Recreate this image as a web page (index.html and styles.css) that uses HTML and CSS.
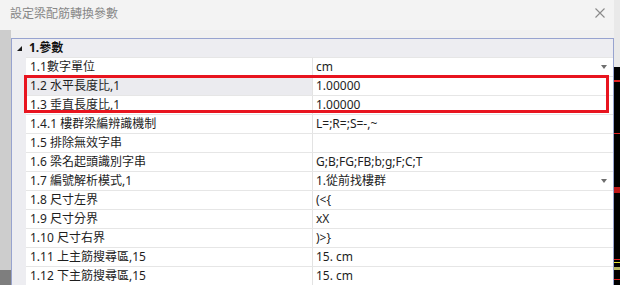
FILE: index.html
```html
<!DOCTYPE html>
<html>
<head>
	<meta charset="UTF-8">
	<title>設定梁配筋轉換參數</title>
	<link rel="stylesheet" href="styles.css">
</head>
<body>
	<div class="screen">
		<div class="dialog">
			<div class="titlebar">
				<span class="title">設定梁配筋轉換參數</span>
				<svg class="close" width="10" height="10" viewBox="0 0 10 10">
					<path d="M0.5 0.5 L9.5 9.5 M9.5 0.5 L0.5 9.5" stroke="#8a8a8a" stroke-width="1.1" fill="none" />
				</svg>
			</div>
			<div class="body">
				<div class="edge"></div>
				<div class="grid">
					<div class="category">
						<svg class="toggle" width="5" height="5" viewBox="0 0 5 5">
							<polygon points="0,5 5,5 5,0" fill="#1a1a1a" />
						</svg>
						<span>1.參數</span>
					</div>
					<div class="rows">
						<div class="gutter"></div>
						<div class="list">
							<div class="row">
								<div class="name">1.1數字單位</div>
								<div class="value">cm<span class="drop"></span></div>
							</div>
							<div class="row current">
								<div class="name">1.2 水平長度比,1</div>
								<div class="value">1.00000</div>
							</div>
							<div class="row">
								<div class="name">1.3 垂直長度比,1</div>
								<div class="value">1.00000</div>
							</div>
							<div class="row">
								<div class="name">1.4.1 樓群梁編辨識機制</div>
								<div class="value">L=;R=;S=-,~</div>
							</div>
							<div class="row">
								<div class="name">1.5 排除無效字串</div>
								<div class="value"></div>
							</div>
							<div class="row">
								<div class="name">1.6 梁名起頭識別字串</div>
								<div class="value">G;B;FG;FB;b;g;F;C;T</div>
							</div>
							<div class="row">
								<div class="name">1.7 編號解析模式,1</div>
								<div class="value">1.從前找樓群<span class="drop"></span></div>
							</div>
							<div class="row">
								<div class="name">1.8 尺寸左界</div>
								<div class="value">(&lt;{</div>
							</div>
							<div class="row">
								<div class="name">1.9 尺寸分界</div>
								<div class="value">xX</div>
							</div>
							<div class="row">
								<div class="name">1.10 尺寸右界</div>
								<div class="value">)&gt;}</div>
							</div>
							<div class="row">
								<div class="name">1.11 上主筋搜尋區,15</div>
								<div class="value">15. cm</div>
							</div>
							<div class="row">
								<div class="name">1.12 下主筋搜尋區,15</div>
								<div class="value">15. cm</div>
							</div>
						</div>
					</div>
					<div class="mark"></div>
				</div>
				<div class="spacer"></div>
			</div>
		</div>
		<div class="backdrop"></div>
	</div>
</body>
</html>
```

FILE: styles.css
```css
body {
	margin: 0;
	font-family: "Noto Sans", "Noto Sans CJK TC", sans-serif;
	font-size: 12px;
	color: #1e1e1e;
}

.screen {
	display: flex;
	width: 620px;
	height: 285px;
	overflow: hidden;
}

.dialog {
	width: 614px;
	display: flex;
	flex-direction: column;
	background-color: #f0f0f0;
}

.titlebar {
	height: 30px;
	box-sizing: border-box;
	padding: 0 9px 5px 10px;
	display: flex;
	align-items: center;
	justify-content: space-between;
	background-color: #f3f3f3;
	color: #868686;
}

.title {
	font-family: "Noto Sans CJK TC", sans-serif;
	line-height: 16px;
}

.body {
	flex: 1;
	display: flex;
	min-height: 0;
}

.edge {
	width: 11px;
	background: linear-gradient(to bottom, #cdcdcd 0 240px, #7e7e7e 240px);
}

.spacer {
	flex: 1;
}

/* property grid */
.grid {
	position: relative;
	width: 601px;
	margin-top: 8px;
	border: 1px solid #97a3cf;
	border-bottom: none;
	background-color: #fff;
	display: flex;
	flex-direction: column;
}

.category {
	height: 19px;
	display: flex;
	align-items: center;
	padding-left: 5px;
	background-color: #ededf1;
	font-weight: bold;
	color: #111;
}

.category span {
	margin-left: 7px;
	line-height: 18px;
}

.rows {
	flex: 1;
	display: flex;
}

.gutter {
	width: 14px;
	background-color: #ededf1;
}

.list {
	flex: 1;
}

.row {
	display: flex;
	height: 19px;
	box-sizing: border-box;
	border-top: 1px solid #e6e6e6;
	line-height: 18px;
}

.name {
	width: 287px;
	padding-left: 4px;
	box-sizing: border-box;
	border-right: 1px solid #e3e3e3;
	flex: none;
	white-space: nowrap;
}

.current .name {
	background-color: #ebebef;
}

.value {
	flex: 1;
	display: flex;
	align-items: center;
	padding-left: 3px;
	white-space: nowrap;
}

.drop {
	margin-left: auto;
	margin-right: 6px;
	width: 0;
	height: 0;
	border-left: 3.5px solid transparent;
	border-right: 3.5px solid transparent;
	border-top: 4px solid #6e6e6e;
}

/* red annotation box over rows 1.2 and 1.3 */
.mark {
	position: absolute;
	left: 12px;
	top: 36px;
	width: 585px;
	height: 38px;
	box-sizing: border-box;
	border: 3px solid #e8141f;
}

.backdrop {
	width: 6px;
	background: linear-gradient(to bottom,
			#e9e9e9 0 67px,
			#000 67px 80px,
			#e02020 80px 82px,
			#000 82px 133px,
			#e02020 133px 134px,
			#000 134px 187px,
			#c01818 187px 193px,
			#000 193px 259px,
			#e02020 259px 260px,
			#000 260px 262px,
			#e8e830 262px 263px,
			#000 263px 267px,
			#b8b860 267px 270px,
			#000 270px 279px,
			#e02020 279px 280px,
			#000 280px);
}
```
